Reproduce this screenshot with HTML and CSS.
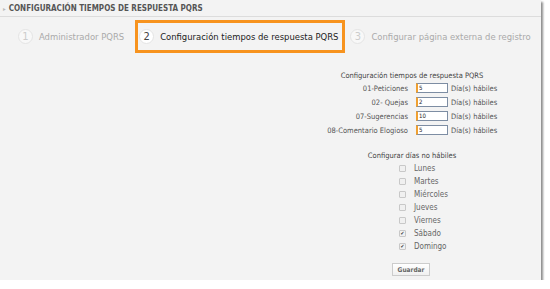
FILE: index.html
```html
<!DOCTYPE html>
<html>
<head>
<meta charset="utf-8">
<link rel="stylesheet" href="styles.css">
</head>
<body>
<div class="panel">
  <div class="header"><span class="arrow">▸</span>CONFIGURACIÓN TIEMPOS DE RESPUESTA PQRS</div>
  <div class="steps">
    <div class="step first"><span class="num">1</span><span class="label">Administrador PQRS</span></div>
    <div class="step active"><span class="num">2</span><span class="label">Configuración tiempos de respuesta PQRS</span></div>
    <div class="step"><span class="num">3</span><span class="label">Configurar página externa de registro</span></div>
  </div>
  <div class="content">
    <div class="title">Configuración tiempos de respuesta PQRS</div>
    <div class="grid">
      <span class="lbl">01-Peticiones</span><span class="inp">5</span><span class="suf">Día(s) hábiles</span>
      <span class="lbl">02- Quejas</span><span class="inp">2</span><span class="suf">Día(s) hábiles</span>
      <span class="lbl">07-Sugerencias</span><span class="inp">10</span><span class="suf">Día(s) hábiles</span>
      <span class="lbl">08-Comentario Elogioso</span><span class="inp">5</span><span class="suf">Día(s) hábiles</span>
    </div>
    <div class="title title2">Configurar días no hábiles</div>
    <div class="checks">
      <div class="chk"><span class="box"></span>Lunes</div>
      <div class="chk"><span class="box"></span>Martes</div>
      <div class="chk"><span class="box"></span>Miércoles</div>
      <div class="chk"><span class="box"></span>Jueves</div>
      <div class="chk"><span class="box"></span>Viernes</div>
      <div class="chk"><span class="box on">✔</span>Sábado</div>
      <div class="chk"><span class="box on">✔</span>Domingo</div>
    </div>
    <div class="btn">Guardar</div>
  </div>
</div>
</body>
</html>
```
FILE: styles.css
```css
body {
  margin: 0;
  background: #fff;
  font-family: "DejaVu Sans Condensed", "DejaVu Sans", sans-serif;
}
.panel {
  width: 541px;
  height: 280px;
  background: #f3f3f3;
  box-shadow: 2px 2px 2px rgba(0,0,0,0.45);
  box-sizing: border-box;
}
.header {
  height: 17px;
  border-bottom: 1px solid #dcdcdc;
  box-sizing: border-box;
  display: flex;
  align-items: center;
  font-size: 8px;
  font-weight: bold;
  color: #555;
  padding-left: 3px;
}
.arrow {
  color: #bbb;
  font-size: 6px;
  margin-right: 3px;
}
.steps {
  display: flex;
  align-items: center;
  height: 33px;
  margin-top: 3px;
  padding-left: 18px;
}
.step {
  display: flex;
  align-items: center;
  font-size: 9.4px;
  color: #aaa;
}
.step.first {
  margin-right: 11px;
}
.step .num {
  width: 15px;
  height: 15px;
  border-radius: 50%;
  background: #f8f8f8;
  border: 1px solid #e4e4e4;
  box-sizing: border-box;
  display: flex;
  align-items: center;
  justify-content: center;
  font-size: 11px;
  color: #ccc;
  margin-right: 6px;
}
.step.active {
  border: 3px solid #f7931e;
  height: 33px;
  box-sizing: border-box;
  padding: 0 4px 0 1px;
  margin-right: 5px;
  color: #222;
}
.step.active .num {
  color: #444;
  background: #fff;
}
.content {
  display: flex;
  flex-direction: column;
  align-items: center;
  padding-left: 283px;
  padding-top: 18px;
  font-size: 7.5px;
  color: #555;
}
.title {
  font-size: 7.5px;
  color: #444;
  line-height: 10px;
  margin-bottom: 2px;
}
.grid {
  align-self: flex-start;
  margin-left: 38px;
  display: grid;
  grid-template-columns: 95px 32px auto;
  row-gap: 4px;
  align-items: center;
}
.lbl {
  text-align: right;
  padding-right: 8px;
  white-space: nowrap;
}
.inp {
  height: 10px;
  box-sizing: border-box;
  background: #fff;
  border: 1px solid #7d8da3;
  border-left: 2px solid #f0a030;
  font-size: 6px;
  line-height: 8px;
  padding-left: 1px;
  color: #222;
}
.suf {
  white-space: nowrap;
  padding-left: 3px;
}
.title2 {
  margin-top: 16px;
}
.checks {
  align-self: flex-start;
  margin-left: 116px;
  display: flex;
  flex-direction: column;
  gap: 3px;
  margin-top: 0;
}
.chk {
  display: flex;
  align-items: center;
  height: 10px;
  font-size: 8px;
  color: #666;
}
.box {
  width: 5px;
  height: 5px;
  border: 1px solid #c8c8c8;
  background: #f0f0f0;
  border-radius: 1px;
  margin-right: 8px;
  font-size: 5px;
  line-height: 5px;
  text-align: center;
  color: #333;
}
.btn {
  align-self: flex-start;
  margin-left: 109px;
  margin-top: 12px;
  width: 38px;
  height: 13px;
  box-sizing: border-box;
  border: 1px solid #ccc;
  background: linear-gradient(#fff, #f0f0f0);
  font-size: 6.5px;
  font-weight: bold;
  color: #666;
  display: flex;
  align-items: center;
  justify-content: center;
}
```
